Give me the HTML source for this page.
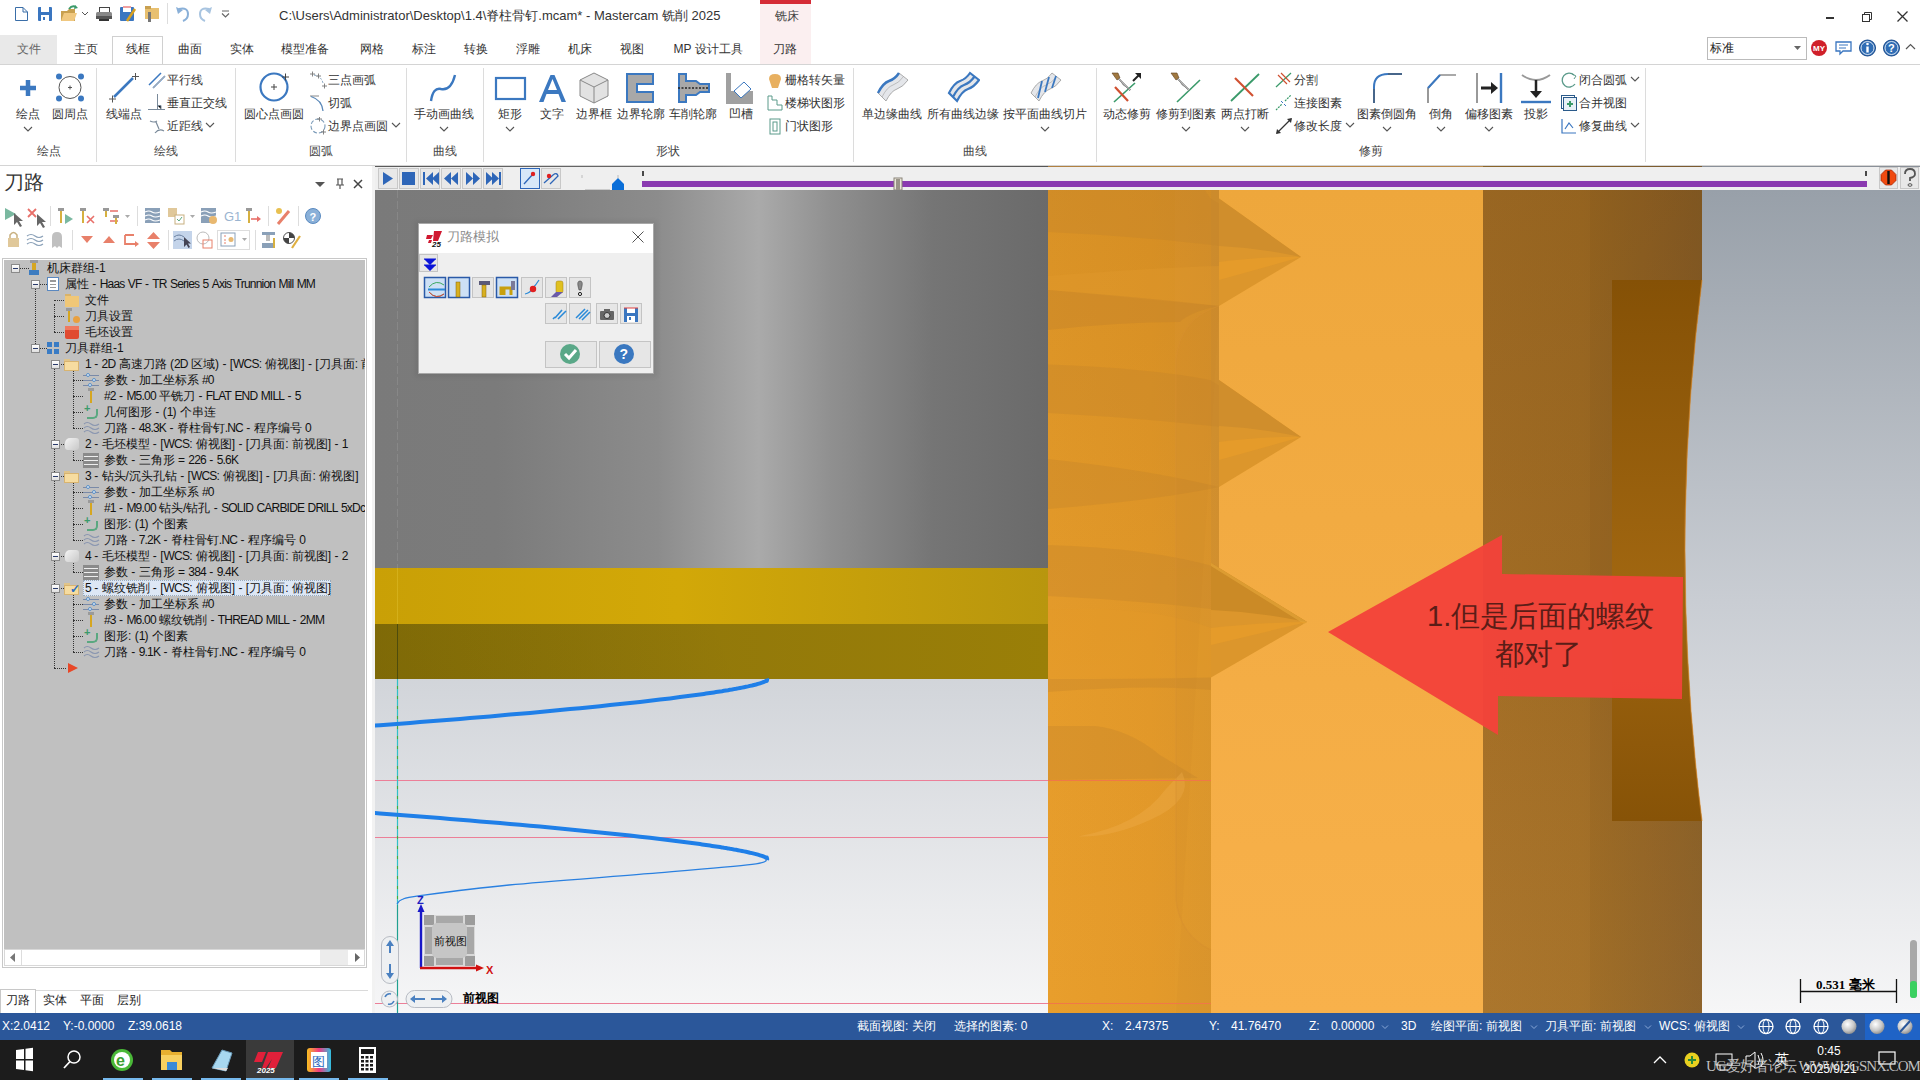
<!DOCTYPE html>
<html><head><meta charset="utf-8">
<style>
*{box-sizing:border-box}
html,body{margin:0;padding:0}
body{width:1920px;height:1080px;overflow:hidden;position:relative;font-family:"Liberation Sans",sans-serif;background:#fff;color:#222}
.a{position:absolute}
.t{position:absolute;white-space:nowrap;line-height:1}
</style></head><body>
<svg class="a" style="left:0px;top:0px" width="240" height="32" viewBox="0 0 240 32"><path d="M15.5 7.5 H23 L27.5 12 V20.5 H15.5 Z M23 7.5 V12 H27.5" stroke="#3a6ea8" stroke-width="1" fill="#fff"/><rect x="38" y="7" width="14" height="14" rx="1" fill="#3a76c0"/><rect x="41" y="7" width="8" height="5" fill="#fff"/><rect x="41" y="15" width="8" height="6" fill="#fff"/><rect x="43" y="17" width="2" height="3" fill="#3a76c0"/><path d="M61 11 H67 L69 9 H75 V21 H61 Z" fill="#c8a050"/><path d="M61 21 L64 13 H77 L74 21 Z" fill="#f0c880"/><path d="M69 9 Q72 5 76 7" stroke="#3a9a6a" stroke-width="2" fill="none"/><path d="M75 5 L78 8 L74 9 Z" fill="#3a9a6a"/><path d="M82 12 L85 15 L88 12" stroke="#555" fill="none"/><rect x="99.5" y="7.5" width="10" height="5" fill="#fff" stroke="#444"/><rect x="96" y="12" width="16" height="7" rx="1.5" fill="#888"/><rect x="96" y="16" width="16" height="3" fill="#555"/><rect x="99" y="19" width="10" height="2" fill="#333"/><rect x="120" y="7" width="14" height="14" rx="1" fill="#3a76c0"/><rect x="123" y="7" width="8" height="5" fill="#fff"/><path d="M123 7 H131" stroke="#e04040"/><path d="M127 21 L135 9" stroke="#d8a020" stroke-width="2.5"/><rect x="145" y="8" width="14" height="11" fill="#e8c070"/><rect x="145" y="6" width="6" height="3" fill="#c8a050"/><rect x="148" y="12" width="3" height="10" fill="#777"/><rect x="167" y="3" width="1" height="21" fill="#ddd"/><path d="M179 9 Q188 7 188 14 Q188 19 183 21" stroke="#8ab0d8" stroke-width="2" fill="none"/><path d="M176 7 L178 14 L183 10 Z" fill="#8ab0d8"/><path d="M209 9 Q200 7 200 14 Q200 19 205 21" stroke="#a8c4e0" stroke-width="2" fill="none"/><path d="M212 7 L210 14 L205 10 Z" fill="#a8c4e0"/><path d="M222 11 H229 M222 13.5 L225.5 17 L229 13.5" stroke="#666" stroke-width="1.2" fill="none"/></svg>
<div class="t" style="left:279px;top:9px;font-size:13px;color:#333;">C:\Users\Administrator\Desktop\1.4\脊柱骨钉.mcam* - Mastercam 铣削 2025</div>
<div class="a" style="left:760px;top:0;width:51px;height:64px;background:#fbeff0"></div>
<div class="a" style="left:760px;top:0;width:51px;height:4px;background:#d52b36"></div>
<div class="t" style="left:775px;top:10px;font-size:12px;color:#444;">铣床</div>
<div class="a" style="left:1826px;top:17px;width:8px;height:1.5px;background:#333"></div>
<svg class="a" style="left:1861px;top:11px" width="12" height="12" viewBox="0 0 12 12"><rect x="1.5" y="3.5" width="7" height="7" stroke="#333" fill="#fff"/><path d="M3.5 3.5 V1.5 H10.5 V8.5 H8.5" stroke="#333" fill="none"/></svg>
<svg class="a" style="left:1896px;top:10px" width="13" height="13" viewBox="0 0 13 13"><path d="M1.5 1.5 L11.5 11.5 M11.5 1.5 L1.5 11.5" stroke="#333" stroke-width="1.3"/></svg>
<div class="a" style="left:0;top:35px;width:57px;height:29px;background:#e9e9e9"></div>
<div class="a" style="left:112px;top:36px;width:51px;height:29px;background:#fff;border:1px solid #d0d0d0;border-bottom:none"></div>
<div class="t" style="left:-121px;width:300px;text-align:center;top:43px;font-size:12px;color:#666;">文件</div>
<div class="t" style="left:-64px;width:300px;text-align:center;top:43px;font-size:12px;color:#333;">主页</div>
<div class="t" style="left:-12px;width:300px;text-align:center;top:43px;font-size:12px;color:#333;">线框</div>
<div class="t" style="left:40px;width:300px;text-align:center;top:43px;font-size:12px;color:#333;">曲面</div>
<div class="t" style="left:92px;width:300px;text-align:center;top:43px;font-size:12px;color:#333;">实体</div>
<div class="t" style="left:155px;width:300px;text-align:center;top:43px;font-size:12px;color:#333;">模型准备</div>
<div class="t" style="left:222px;width:300px;text-align:center;top:43px;font-size:12px;color:#333;">网格</div>
<div class="t" style="left:274px;width:300px;text-align:center;top:43px;font-size:12px;color:#333;">标注</div>
<div class="t" style="left:326px;width:300px;text-align:center;top:43px;font-size:12px;color:#333;">转换</div>
<div class="t" style="left:378px;width:300px;text-align:center;top:43px;font-size:12px;color:#333;">浮雕</div>
<div class="t" style="left:430px;width:300px;text-align:center;top:43px;font-size:12px;color:#333;">机床</div>
<div class="t" style="left:482px;width:300px;text-align:center;top:43px;font-size:12px;color:#333;">视图</div>
<div class="t" style="left:558px;width:300px;text-align:center;top:43px;font-size:12px;color:#333;">MP 设计工具</div>
<div class="t" style="left:635px;width:300px;text-align:center;top:43px;font-size:12px;color:#333;">刀路</div>
<div class="a" style="left:1707px;top:37px;width:100px;height:23px;border:1px solid #bbb;background:#fff"></div>
<div class="t" style="left:1710px;top:42px;font-size:12px;color:#222;">标准</div>
<svg class="a" style="left:1794px;top:46px" width="8" height="5" viewBox="0 0 8 5"><path d="M0 0 H7 L3.5 4 Z" fill="#666"/></svg>
<svg class="a" style="left:1810px;top:38px" width="20" height="20" viewBox="0 0 20 20"><circle cx="9" cy="10" r="8" fill="#d0202a"/><text x="3" y="13" font-size="8" fill="#fff" font-family="Liberation Sans" font-weight="bold">MY</text></svg>
<svg class="a" style="left:1834px;top:38px" width="20" height="20" viewBox="0 0 20 20"><path d="M2 4 H17 V13 H9 L6 16 V13 H2 Z" stroke="#3a76c0" stroke-width="1.3" fill="#fff"/><path d="M5 7 H14 M5 10 H12" stroke="#3a76c0"/></svg>
<svg class="a" style="left:1858px;top:38px" width="20" height="20" viewBox="0 0 20 20"><circle cx="9.5" cy="10" r="8" fill="#2f6db5" stroke="#1a4a8a"/><circle cx="9.5" cy="10" r="6.5" fill="none" stroke="#fff" stroke-width="0.8"/><rect x="8.3" y="8.5" width="2.4" height="6" fill="#fff"/><circle cx="9.5" cy="6" r="1.3" fill="#fff"/></svg>
<svg class="a" style="left:1882px;top:38px" width="20" height="20" viewBox="0 0 20 20"><circle cx="9.5" cy="10" r="8" fill="#2f6db5" stroke="#1a4a8a"/><circle cx="9.5" cy="10" r="6.5" fill="none" stroke="#fff" stroke-width="0.8"/><text x="6" y="14" font-size="11" fill="#fff" font-family="Liberation Sans" font-weight="bold">?</text></svg>
<svg class="a" style="left:1905px;top:43px" width="11" height="7" viewBox="0 0 11 7"><path d="M1 6 L5.5 1.5 L10 6" stroke="#555" stroke-width="1.2" fill="none"/></svg>
<div class="a" style="left:0;top:64px;width:1920px;height:1px;background:#d4d4d4"></div>
<div class="a" style="left:0;top:165px;width:1920px;height:1px;background:#d4d4d4"></div>
<div class="a" style="left:96px;top:68px;width:1px;height:94px;background:#dcdcdc"></div>
<div class="a" style="left:235px;top:68px;width:1px;height:94px;background:#dcdcdc"></div>
<div class="a" style="left:406px;top:68px;width:1px;height:94px;background:#dcdcdc"></div>
<div class="a" style="left:483px;top:68px;width:1px;height:94px;background:#dcdcdc"></div>
<div class="a" style="left:853px;top:68px;width:1px;height:94px;background:#dcdcdc"></div>
<div class="a" style="left:1096px;top:68px;width:1px;height:94px;background:#dcdcdc"></div>
<div class="a" style="left:1645px;top:68px;width:1px;height:94px;background:#dcdcdc"></div>
<div class="t" style="left:-101px;width:300px;text-align:center;top:145px;font-size:12px;color:#444;">绘点</div>
<div class="t" style="left:16px;width:300px;text-align:center;top:145px;font-size:12px;color:#444;">绘线</div>
<div class="t" style="left:171px;width:300px;text-align:center;top:145px;font-size:12px;color:#444;">圆弧</div>
<div class="t" style="left:295px;width:300px;text-align:center;top:145px;font-size:12px;color:#444;">曲线</div>
<div class="t" style="left:518px;width:300px;text-align:center;top:145px;font-size:12px;color:#444;">形状</div>
<div class="t" style="left:825px;width:300px;text-align:center;top:145px;font-size:12px;color:#444;">曲线</div>
<div class="t" style="left:1221px;width:300px;text-align:center;top:145px;font-size:12px;color:#444;">修剪</div>
<svg class="a" style="left:11px;top:71px" width="34" height="34" viewBox="0 0 34 34"><path d="M17 9 V25 M9 17 H25" stroke="#3b78c0" stroke-width="4.5"/></svg>
<div class="t" style="left:-122px;width:300px;text-align:center;top:108px;font-size:12px;color:#333;">绘点</div>
<svg class="a" style="left:23px;top:126px" width="10" height="6" viewBox="0 0 10 6"><path d="M1 1 L5 5 L9 1" stroke="#555" stroke-width="1.1" fill="none"/></svg>
<svg class="a" style="left:53px;top:71px" width="34" height="34" viewBox="0 0 34 34"><circle cx="17" cy="16.5" r="11" stroke="#555" stroke-width="1" fill="none"/><path d="M15 16.5 H19 M17 14.5 V18.5" stroke="#555"/><circle cx="6" cy="5.5" r="3" fill="#3b78c0"/><circle cx="28" cy="5.5" r="3" fill="#3b78c0"/><circle cx="6" cy="27.5" r="3" fill="#3b78c0"/><circle cx="28" cy="27.5" r="3" fill="#3b78c0"/></svg>
<div class="t" style="left:-80px;width:300px;text-align:center;top:108px;font-size:12px;color:#333;">圆周点</div>
<svg class="a" style="left:107px;top:71px" width="34" height="34" viewBox="0 0 34 34"><path d="M7 26 L26 7" stroke="#3b78c0" stroke-width="2.5"/><path d="M2 28 H9 M5.5 24.5 V31.5 M25 5.5 H32 M28.5 2 V9" stroke="#555" stroke-width="1"/></svg>
<div class="t" style="left:-26px;width:300px;text-align:center;top:108px;font-size:12px;color:#333;">线端点</div>
<svg class="a" style="left:148px;top:71px" width="18" height="18" viewBox="0 0 18 18"><path d="M1 14 L13 2 M5 17 L17 5" stroke="#3b78c0" stroke-width="1.5"/><path d="M5 17 L17 5" stroke="#aaa" stroke-width="1"/></svg>
<div class="t" style="left:167px;top:74px;font-size:12px;color:#333;">平行线</div>
<svg class="a" style="left:148px;top:94px" width="18" height="18" viewBox="0 0 18 18"><path d="M0 15.5 H17 M9.5 0 V15 M9.5 11.5 H13 V15" stroke="#7a8a9a" stroke-width="1"/></svg>
<div class="t" style="left:167px;top:97px;font-size:12px;color:#333;">垂直正交线</div>
<svg class="a" style="left:148px;top:117px" width="18" height="18" viewBox="0 0 18 18"><path d="M2 4 Q6 6 9 4 M8 5 L11 12 M7 16 Q11 11 16 14" stroke="#7a8a9a" stroke-width="1.2" fill="none"/></svg>
<div class="t" style="left:167px;top:120px;font-size:12px;color:#333;">近距线</div>
<svg class="a" style="left:205px;top:122px" width="10" height="6" viewBox="0 0 10 6"><path d="M1 1 L5 5 L9 1" stroke="#555" stroke-width="1.1" fill="none"/></svg>
<svg class="a" style="left:257px;top:71px" width="34" height="34" viewBox="0 0 34 34"><circle cx="17" cy="16" r="13.5" stroke="#3b78c0" stroke-width="2.2" fill="none"/><path d="M14 16 H20 M17 13 V19 M25 6 H32 M28.5 2.5 V9.5" stroke="#444" stroke-width="1"/></svg>
<div class="t" style="left:124px;width:300px;text-align:center;top:108px;font-size:12px;color:#333;">圆心点画圆</div>
<svg class="a" style="left:309px;top:71px" width="18" height="18" viewBox="0 0 18 18"><path d="M5 4 Q12 5 14 12" stroke="#7a9ab8" stroke-width="1" fill="none" stroke-dasharray="2 1.5"/><path d="M1 3 H6 M3.5 0.5 V5.5 M7 5 H12 M9.5 2.5 V7.5 M13 15 H18 M15.5 12.5 V17.5" stroke="#777" stroke-width="0.9"/></svg>
<div class="t" style="left:328px;top:74px;font-size:12px;color:#333;">三点画弧</div>
<svg class="a" style="left:309px;top:94px" width="18" height="18" viewBox="0 0 18 18"><path d="M1 2 H10" stroke="#888" stroke-width="1"/><path d="M2 2.5 Q13 6 14 17" stroke="#5a88b8" stroke-width="1.3" fill="none"/></svg>
<div class="t" style="left:328px;top:97px;font-size:12px;color:#333;">切弧</div>
<svg class="a" style="left:309px;top:117px" width="18" height="18" viewBox="0 0 18 18"><circle cx="9" cy="9" r="7" stroke="#7a9ab8" stroke-width="1.1" fill="none" stroke-dasharray="4 2"/><path d="M8 2 H13 M10.5 -0.5 V4.5 M12 15 H17 M14.5 12.5 V17.5" stroke="#777" stroke-width="0.9"/></svg>
<div class="t" style="left:328px;top:120px;font-size:12px;color:#333;">边界点画圆</div>
<svg class="a" style="left:391px;top:122px" width="10" height="6" viewBox="0 0 10 6"><path d="M1 1 L5 5 L9 1" stroke="#555" stroke-width="1.1" fill="none"/></svg>
<svg class="a" style="left:427px;top:71px" width="34" height="34" viewBox="0 0 34 34"><path d="M4 30 Q6 16 14 18 Q24 20 28 4" stroke="#3b78c0" stroke-width="2.4" fill="none"/></svg>
<div class="t" style="left:294px;width:300px;text-align:center;top:108px;font-size:12px;color:#333;">手动画曲线</div>
<svg class="a" style="left:439px;top:126px" width="10" height="6" viewBox="0 0 10 6"><path d="M1 1 L5 5 L9 1" stroke="#555" stroke-width="1.1" fill="none"/></svg>
<svg class="a" style="left:493px;top:71px" width="34" height="34" viewBox="0 0 34 34"><rect x="3" y="7" width="29" height="21" stroke="#3b78c0" stroke-width="2.2" fill="none"/></svg>
<div class="t" style="left:360px;width:300px;text-align:center;top:108px;font-size:12px;color:#333;">矩形</div>
<svg class="a" style="left:505px;top:126px" width="10" height="6" viewBox="0 0 10 6"><path d="M1 1 L5 5 L9 1" stroke="#555" stroke-width="1.1" fill="none"/></svg>
<svg class="a" style="left:535px;top:71px" width="34" height="34" viewBox="0 0 34 34"><path d="M4 31 L15.5 4 H19.5 L31 31 H26.5 L23.5 23 H11.5 L8.5 31 Z M13 19 H22 L17.5 8 Z" fill="#3b78c0" fill-rule="evenodd"/></svg>
<div class="t" style="left:402px;width:300px;text-align:center;top:108px;font-size:12px;color:#333;">文字</div>
<svg class="a" style="left:577px;top:71px" width="34" height="34" viewBox="0 0 34 34"><path d="M17 2 L31 9 V25 L17 32 L3 25 V9 Z" fill="#e2e2e2" stroke="#888"/><path d="M3 9 L17 16 L31 9 M17 16 V32" stroke="#888" fill="none"/></svg>
<div class="t" style="left:444px;width:300px;text-align:center;top:108px;font-size:12px;color:#333;">边界框</div>
<svg class="a" style="left:624px;top:71px" width="34" height="34" viewBox="0 0 34 34"><path d="M3 3 H29 V13 H13 V21 H29 V31 H3 Z" fill="#a8a8a8" stroke="#3b78c0" stroke-width="2"/></svg>
<div class="t" style="left:491px;width:300px;text-align:center;top:108px;font-size:12px;color:#333;">边界轮廓</div>
<svg class="a" style="left:676px;top:71px" width="34" height="34" viewBox="0 0 34 34"><path d="M3 3 H10 V10 H20 L24 13 H33 V21 H24 L20 24 H10 V31 H3 Z" fill="#a8a8a8" stroke="#3b78c0" stroke-width="2"/><path d="M2 17 H33" stroke="#222" stroke-width="1.5" stroke-dasharray="2 1.5"/></svg>
<div class="t" style="left:543px;width:300px;text-align:center;top:108px;font-size:12px;color:#333;">车削轮廓</div>
<svg class="a" style="left:724px;top:71px" width="34" height="34" viewBox="0 0 34 34"><path d="M2 2 H7 V20 H29 V33 H2 Z" fill="#a0a0a0"/><path d="M10 20 L20 11 L27 18 L17 27 Z" fill="#fff" stroke="#3b78c0" stroke-width="1"/></svg>
<div class="t" style="left:591px;width:300px;text-align:center;top:108px;font-size:12px;color:#333;">凹槽</div>
<svg class="a" style="left:766px;top:71px" width="18" height="18" viewBox="0 0 18 18"><path d="M3 8 Q3 3 9 3 Q15 3 15 8 L12 17 H6 Z" fill="#e8b060"/></svg>
<div class="t" style="left:785px;top:74px;font-size:12px;color:#333;">栅格转矢量</div>
<svg class="a" style="left:766px;top:94px" width="18" height="18" viewBox="0 0 18 18"><path d="M2 2 V16 H16 V11 H11 V6 H6 V2 Z" stroke="#5a9a8a" stroke-width="1" fill="none"/></svg>
<div class="t" style="left:785px;top:97px;font-size:12px;color:#333;">楼梯状图形</div>
<svg class="a" style="left:766px;top:117px" width="18" height="18" viewBox="0 0 18 18"><rect x="4" y="2" width="10" height="15" stroke="#5a9a8a" fill="none"/><rect x="7" y="5" width="4" height="9" stroke="#5a9a8a" fill="none"/></svg>
<div class="t" style="left:785px;top:120px;font-size:12px;color:#333;">门状图形</div>
<svg class="a" style="left:875px;top:71px" width="34" height="34" viewBox="0 0 34 34"><path d="M3 22 Q8 12 14 10 Q20 8 24 2 L33 9 Q28 16 22 18 Q16 20 11 30 Z" fill="#e4e6ea" stroke="#999" stroke-width="0.8"/><path d="M7 26 Q12 16 18 14 Q24 12 28.5 5.5" stroke="#aaa" stroke-width="0.7" fill="none"/><path d="M3 22 Q8 12 14 10 Q20 8 24 2" stroke="#3b78c0" stroke-width="2.4" fill="none"/></svg>
<div class="t" style="left:742px;width:300px;text-align:center;top:108px;font-size:12px;color:#333;">单边缘曲线</div>
<svg class="a" style="left:946px;top:71px" width="34" height="34" viewBox="0 0 34 34"><path d="M3 22 Q8 12 14 10 Q20 8 24 2 L33 9 Q28 16 22 18 Q16 20 11 30 Z" fill="#e4e6ea" stroke="#999" stroke-width="0.8"/><path d="M7 26 Q12 16 18 14 Q24 12 28.5 5.5" stroke="#aaa" stroke-width="0.7" fill="none"/><path d="M3 22 Q8 12 14 10 Q20 8 24 2 L33 9 Q28 16 22 18 Q16 20 11 30 Z M7 26 Q12 16 18 14 Q24 12 28.5 5.5" stroke="#3b78c0" stroke-width="2.2" fill="none"/></svg>
<div class="t" style="left:813px;width:300px;text-align:center;top:108px;font-size:12px;color:#333;">所有曲线边缘</div>
<svg class="a" style="left:1028px;top:71px" width="34" height="34" viewBox="0 0 34 34"><path d="M3 22 Q8 12 14 10 Q20 8 24 2 L33 9 Q28 16 22 18 Q16 20 11 30 Z" fill="#e4e6ea" stroke="#999" stroke-width="0.8"/><path d="M7 26 Q12 16 18 14 Q24 12 28.5 5.5" stroke="#aaa" stroke-width="0.7" fill="none"/><path d="M10 27 L14 10 M17 21 L21 6 M24 17 L28 5" stroke="#3b78c0" stroke-width="1.8"/></svg>
<div class="t" style="left:895px;width:300px;text-align:center;top:108px;font-size:12px;color:#333;">按平面曲线切片</div>
<svg class="a" style="left:1040px;top:126px" width="10" height="6" viewBox="0 0 10 6"><path d="M1 1 L5 5 L9 1" stroke="#555" stroke-width="1.1" fill="none"/></svg>
<svg class="a" style="left:1110px;top:71px" width="34" height="34" viewBox="0 0 34 34"><path d="M4 31 L25 12" stroke="#3a9a6a" stroke-width="1.6"/><path d="M5 16 L18 30" stroke="#d05030" stroke-width="2.2"/><path d="M2 2 L8 2 L10 7 L7 9 Z" fill="#a07840" stroke="#604020" stroke-width="0.6"/><path d="M8 8 L20 20 L12 12 Z M9 7 L21 19 L13 14 Z" fill="#b8b8b8" stroke="#888" stroke-width="0.6"/><path d="M23 10 L30 3" stroke="#222" stroke-width="2"/><path d="M25 2 H31 V8 Z" fill="#222"/></svg>
<div class="t" style="left:977px;width:300px;text-align:center;top:108px;font-size:12px;color:#333;">动态修剪</div>
<svg class="a" style="left:1169px;top:71px" width="34" height="34" viewBox="0 0 34 34"><path d="M8 31 L31 9" stroke="#3a9a6a" stroke-width="1.6"/><path d="M2 2 L8 2 L10 7 L7 9 Z" fill="#a07840" stroke="#604020" stroke-width="0.6"/><path d="M8 8 L20 20 L12 12 Z M9 7 L21 19 L13 14 Z" fill="#b8b8b8" stroke="#888" stroke-width="0.6"/></svg>
<div class="t" style="left:1036px;width:300px;text-align:center;top:108px;font-size:12px;color:#333;">修剪到图素</div>
<svg class="a" style="left:1181px;top:126px" width="10" height="6" viewBox="0 0 10 6"><path d="M1 1 L5 5 L9 1" stroke="#555" stroke-width="1.1" fill="none"/></svg>
<svg class="a" style="left:1228px;top:71px" width="34" height="34" viewBox="0 0 34 34"><path d="M3 30 L31 3" stroke="#3a9a6a" stroke-width="1.8"/><path d="M7 7 L25 25" stroke="#d05030" stroke-width="2.2"/></svg>
<div class="t" style="left:1095px;width:300px;text-align:center;top:108px;font-size:12px;color:#333;">两点打断</div>
<svg class="a" style="left:1240px;top:126px" width="10" height="6" viewBox="0 0 10 6"><path d="M1 1 L5 5 L9 1" stroke="#555" stroke-width="1.1" fill="none"/></svg>
<svg class="a" style="left:1275px;top:71px" width="18" height="18" viewBox="0 0 18 18"><path d="M1 16 L16 2" stroke="#3a9a6a" stroke-width="1.2"/><path d="M3 4 L12 13 M6 2 L15 11" stroke="#d05030" stroke-width="1.2"/></svg>
<div class="t" style="left:1294px;top:74px;font-size:12px;color:#333;">分割</div>
<svg class="a" style="left:1275px;top:94px" width="18" height="18" viewBox="0 0 18 18"><path d="M1 16 L7 10 M10 7 L16 1" stroke="#3a9a6a" stroke-width="1.2" stroke-dasharray="2 1"/><path d="M6 7 L8 9 M9 10 L11 12" stroke="#3a76c0"/></svg>
<div class="t" style="left:1294px;top:97px;font-size:12px;color:#333;">连接图素</div>
<svg class="a" style="left:1275px;top:117px" width="18" height="18" viewBox="0 0 18 18"><path d="M2 16 L16 2" stroke="#333" stroke-width="1.2"/><path d="M1 17 L2 12 L6 16 Z M17 1 L12 2 L16 6 Z" fill="#333"/></svg>
<div class="t" style="left:1294px;top:120px;font-size:12px;color:#333;">修改长度</div>
<svg class="a" style="left:1345px;top:122px" width="10" height="6" viewBox="0 0 10 6"><path d="M1 1 L5 5 L9 1" stroke="#555" stroke-width="1.1" fill="none"/></svg>
<svg class="a" style="left:1370px;top:71px" width="34" height="34" viewBox="0 0 34 34"><path d="M4 32 V16 Q4 3 18 3 H32" stroke="#3b78c0" stroke-width="2" fill="none"/><path d="M4 32 V18 M18 3 H32" stroke="#555" stroke-width="1" fill="none"/></svg>
<div class="t" style="left:1237px;width:300px;text-align:center;top:108px;font-size:12px;color:#333;">图素倒圆角</div>
<svg class="a" style="left:1382px;top:126px" width="10" height="6" viewBox="0 0 10 6"><path d="M1 1 L5 5 L9 1" stroke="#555" stroke-width="1.1" fill="none"/></svg>
<svg class="a" style="left:1424px;top:71px" width="34" height="34" viewBox="0 0 34 34"><path d="M4 32 V17 L16 4 H32" stroke="#555" stroke-width="1.2" fill="none"/><path d="M4 17 L16 4" stroke="#3b78c0" stroke-width="2"/></svg>
<div class="t" style="left:1291px;width:300px;text-align:center;top:108px;font-size:12px;color:#333;">倒角</div>
<svg class="a" style="left:1436px;top:126px" width="10" height="6" viewBox="0 0 10 6"><path d="M1 1 L5 5 L9 1" stroke="#555" stroke-width="1.1" fill="none"/></svg>
<svg class="a" style="left:1472px;top:71px" width="34" height="34" viewBox="0 0 34 34"><path d="M5 2 V32" stroke="#999" stroke-width="2"/><path d="M29 2 V32" stroke="#3b78c0" stroke-width="2.4"/><path d="M9 17 H20" stroke="#222" stroke-width="3"/><path d="M19 11 L26 17 L19 23 Z" fill="#222"/></svg>
<div class="t" style="left:1339px;width:300px;text-align:center;top:108px;font-size:12px;color:#333;">偏移图素</div>
<svg class="a" style="left:1484px;top:126px" width="10" height="6" viewBox="0 0 10 6"><path d="M1 1 L5 5 L9 1" stroke="#555" stroke-width="1.1" fill="none"/></svg>
<svg class="a" style="left:1519px;top:71px" width="34" height="34" viewBox="0 0 34 34"><path d="M3 4 Q17 14 31 4" stroke="#999" stroke-width="2" fill="none"/><path d="M17 9 V22" stroke="#222" stroke-width="2.5"/><path d="M11 20 L17 27 L23 20 Z" fill="#222"/><path d="M2 31 H32" stroke="#3b78c0" stroke-width="2.4"/></svg>
<div class="t" style="left:1386px;width:300px;text-align:center;top:108px;font-size:12px;color:#333;">投影</div>
<svg class="a" style="left:1560px;top:71px" width="18" height="18" viewBox="0 0 18 18"><path d="M14 4 A7 7 0 1 0 15 13" stroke="#5a9a8a" stroke-width="1.3" fill="none"/><path d="M12 3 L16 5 L14 8" stroke="#5a9a8a" fill="none"/></svg>
<div class="t" style="left:1579px;top:74px;font-size:12px;color:#333;">闭合圆弧</div>
<svg class="a" style="left:1630px;top:76px" width="10" height="6" viewBox="0 0 10 6"><path d="M1 1 L5 5 L9 1" stroke="#555" stroke-width="1.1" fill="none"/></svg>
<svg class="a" style="left:1560px;top:94px" width="18" height="18" viewBox="0 0 18 18"><rect x="1.5" y="1.5" width="13" height="13" stroke="#2a5a8a" fill="#fff"/><rect x="3.5" y="3.5" width="13" height="13" stroke="#2a5a8a" fill="#e8f0f8"/><path d="M7 10 H13 M10 7 V13" stroke="#3a9a6a" stroke-width="2"/></svg>
<div class="t" style="left:1579px;top:97px;font-size:12px;color:#333;">合并视图</div>
<svg class="a" style="left:1560px;top:117px" width="18" height="18" viewBox="0 0 18 18"><path d="M2 2 V16 H16 M5 12 L9 6 L13 11" stroke="#3a76c0" stroke-width="1.2" fill="none"/></svg>
<div class="t" style="left:1579px;top:120px;font-size:12px;color:#333;">修复曲线</div>
<svg class="a" style="left:1630px;top:122px" width="10" height="6" viewBox="0 0 10 6"><path d="M1 1 L5 5 L9 1" stroke="#555" stroke-width="1.1" fill="none"/></svg><div class="a" style="left:0;top:166px;width:375px;height:847px;background:#fff"></div>
<div class="t" style="left:4px;top:172px;font-size:20px;color:#333">刀路</div>
<svg class="a" style="left:312px;top:177px" width="56" height="14"><path d="M3 5 H13 L8 10 Z" fill="#555"/><path d="M25 2 H31 M26 2 V8 M30 2 V8 M24 8 H32 M28 8 V12" stroke="#555" stroke-width="1.2" fill="none"/><path d="M42 3 L50 11 M50 3 L42 11" stroke="#444" stroke-width="1.5"/></svg>
<div class="a" style="left:2px;top:258px;width:365px;height:710px;border:1px solid #c8c8c8;background:#fff"></div>
<div class="a" style="left:4px;top:260px;width:361px;height:689px;background:#c0c0c0"></div>
<div class="a" style="left:4px;top:949px;width:361px;height:17px;background:#fff;border:1px solid #d8d8d8"></div>
<svg class="a" style="left:6px;top:951px" width="14" height="13"><path d="M9 2 L4 6.5 L9 11 Z" fill="#777"/></svg>
<div class="a" style="left:320px;top:950px;width:28px;height:15px;background:#ececec"></div>
<svg class="a" style="left:350px;top:951px" width="14" height="13"><path d="M5 2 L10 6.5 L5 11 Z" fill="#666"/></svg>
<div class="a" style="left:21px;top:950px;width:1px;height:15px;background:#ddd"></div>
<div class="a" style="left:0;top:990px;width:368px;height:1px;background:#dadada"></div>
<div class="a" style="left:0;top:989px;width:36px;height:24px;background:#fff;border:1px solid #c8c8c8;border-bottom:none"></div>
<div class="t" style="left:6px;top:994px;font-size:12px;color:#222">刀路</div>
<div class="t" style="left:43px;top:994px;font-size:12px;color:#222">实体</div>
<div class="t" style="left:80px;top:994px;font-size:12px;color:#222">平面</div>
<div class="t" style="left:117px;top:994px;font-size:12px;color:#222">层别</div>
<div class="a" style="left:372px;top:166px;width:3px;height:847px;background:#f2f2f2"></div>
<div class="a" style="left:0;top:0;width:365px;height:949px;overflow:hidden">
<div class="a" style="left:83px;top:580px;width:248px;height:16px;background:#dde7f5;border:1px dotted #9ab"></div>
<div class="a" style="left:35px;top:288px;width:1px;height:60px;border-left:1px dotted #333"></div>
<div class="a" style="left:54px;top:304px;width:1px;height:28px;border-left:1px dotted #333"></div>
<div class="a" style="left:54px;top:368px;width:1px;height:300px;border-left:1px dotted #333"></div>
<div class="a" style="left:54px;top:300px;width:10px;height:1px;border-top:1px dotted #333"></div>
<div class="a" style="left:54px;top:316px;width:10px;height:1px;border-top:1px dotted #333"></div>
<div class="a" style="left:54px;top:332px;width:10px;height:1px;border-top:1px dotted #333"></div>
<div class="a" style="left:73px;top:369px;width:1px;height:59px;border-left:1px dotted #333"></div>
<div class="a" style="left:73px;top:380px;width:10px;height:1px;border-top:1px dotted #333"></div>
<div class="a" style="left:73px;top:396px;width:10px;height:1px;border-top:1px dotted #333"></div>
<div class="a" style="left:73px;top:412px;width:10px;height:1px;border-top:1px dotted #333"></div>
<div class="a" style="left:73px;top:428px;width:10px;height:1px;border-top:1px dotted #333"></div>
<div class="a" style="left:73px;top:449px;width:1px;height:11px;border-left:1px dotted #333"></div>
<div class="a" style="left:73px;top:460px;width:10px;height:1px;border-top:1px dotted #333"></div>
<div class="a" style="left:73px;top:481px;width:1px;height:59px;border-left:1px dotted #333"></div>
<div class="a" style="left:73px;top:492px;width:10px;height:1px;border-top:1px dotted #333"></div>
<div class="a" style="left:73px;top:508px;width:10px;height:1px;border-top:1px dotted #333"></div>
<div class="a" style="left:73px;top:524px;width:10px;height:1px;border-top:1px dotted #333"></div>
<div class="a" style="left:73px;top:540px;width:10px;height:1px;border-top:1px dotted #333"></div>
<div class="a" style="left:73px;top:561px;width:1px;height:11px;border-left:1px dotted #333"></div>
<div class="a" style="left:73px;top:572px;width:10px;height:1px;border-top:1px dotted #333"></div>
<div class="a" style="left:73px;top:593px;width:1px;height:59px;border-left:1px dotted #333"></div>
<div class="a" style="left:73px;top:604px;width:10px;height:1px;border-top:1px dotted #333"></div>
<div class="a" style="left:73px;top:620px;width:10px;height:1px;border-top:1px dotted #333"></div>
<div class="a" style="left:73px;top:636px;width:10px;height:1px;border-top:1px dotted #333"></div>
<div class="a" style="left:73px;top:652px;width:10px;height:1px;border-top:1px dotted #333"></div>
<div class="a" style="left:58px;top:364px;width:6px;height:1px;border-top:1px dotted #333"></div>
<div class="a" style="left:58px;top:444px;width:6px;height:1px;border-top:1px dotted #333"></div>
<div class="a" style="left:58px;top:476px;width:6px;height:1px;border-top:1px dotted #333"></div>
<div class="a" style="left:58px;top:556px;width:6px;height:1px;border-top:1px dotted #333"></div>
<div class="a" style="left:58px;top:588px;width:6px;height:1px;border-top:1px dotted #333"></div>
<div class="a" style="left:54px;top:668px;width:12px;height:1px;border-top:1px dotted #333"></div>
<div class="a" style="left:19px;top:268px;width:10px;height:1px;border-top:1px dotted #333"></div>
<div class="a" style="left:39px;top:284px;width:8px;height:1px;border-top:1px dotted #333"></div>
<div class="a" style="left:39px;top:348px;width:8px;height:1px;border-top:1px dotted #333"></div>
<div class="a" style="left:11px;top:264px;width:9px;height:9px;border:1px solid #8a8a8a;background:linear-gradient(#fff,#e0e0e0)"></div><div class="a" style="left:13px;top:268px;width:5px;height:1px;background:#2a3a6a"></div>
<div class="a" style="left:30px;top:260px;width:8px;height:3px;background:#9a9a9a"></div><div class="a" style="left:32px;top:263px;width:4px;height:7px;background:#d6a620"></div><div class="a" style="left:29px;top:270px;width:10px;height:5px;background:#3d7cc0"></div>
<div class="t" style="left:47px;top:262px;font-size:12px;color:#111">机床群组-<span style="letter-spacing:-0.8px">1</span></div>
<div class="a" style="left:31px;top:280px;width:9px;height:9px;border:1px solid #8a8a8a;background:linear-gradient(#fff,#e0e0e0)"></div><div class="a" style="left:33px;top:284px;width:5px;height:1px;background:#2a3a6a"></div>
<div class="a" style="left:47px;top:277px;width:12px;height:14px;background:#fff;border:1px solid #5a88c0"></div><div class="a" style="left:50px;top:280px;width:6px;height:2px;background:#999"></div><div class="a" style="left:50px;top:284px;width:6px;height:1px;background:#999"></div><div class="a" style="left:50px;top:287px;width:6px;height:1px;background:#999"></div>
<div class="t" style="left:65px;top:278px;font-size:12px;color:#111">属性 - <span style="letter-spacing:-0.8px">Haas</span> <span style="letter-spacing:-0.8px">VF</span> - <span style="letter-spacing:-0.8px">TR</span> <span style="letter-spacing:-0.8px">Series</span> <span style="letter-spacing:-0.8px">5</span> <span style="letter-spacing:-0.8px">Axis</span> <span style="letter-spacing:-0.8px">Trunnion</span> <span style="letter-spacing:-0.8px">Mill</span> <span style="letter-spacing:-0.8px">MM</span></div>
<div class="a" style="left:65px;top:294px;width:6px;height:3px;background:#d9b36a"></div><div class="a" style="left:65px;top:296px;width:14px;height:11px;background:#f0c777"></div>
<div class="t" style="left:85px;top:294px;font-size:12px;color:#111">文件</div>
<div class="a" style="left:66px;top:308px;width:6px;height:3px;background:#9a9a9a"></div><div class="a" style="left:68px;top:311px;width:2px;height:11px;background:#d6a620"></div><div class="a" style="left:73px;top:316px;width:7px;height:7px;border-radius:50%;background:#e8a040"></div>
<div class="t" style="left:85px;top:310px;font-size:12px;color:#111">刀具设置</div>
<div class="a" style="left:65px;top:326px;width:14px;height:13px;background:#e04a30;border-radius:2px"></div><div class="a" style="left:65px;top:326px;width:14px;height:4px;background:#f07a60"></div>
<div class="t" style="left:85px;top:326px;font-size:12px;color:#111">毛坯设置</div>
<div class="a" style="left:31px;top:344px;width:9px;height:9px;border:1px solid #8a8a8a;background:linear-gradient(#fff,#e0e0e0)"></div><div class="a" style="left:33px;top:348px;width:5px;height:1px;background:#2a3a6a"></div>
<div class="a" style="left:47px;top:342px;width:5px;height:5px;background:#3a7cc5"></div><div class="a" style="left:54px;top:342px;width:5px;height:5px;background:#3a7cc5"></div><div class="a" style="left:47px;top:349px;width:5px;height:5px;background:#3a7cc5"></div><div class="a" style="left:54px;top:349px;width:5px;height:5px;background:#3a7cc5"></div>
<div class="t" style="left:65px;top:342px;font-size:12px;color:#111">刀具群组-<span style="letter-spacing:-0.8px">1</span></div>
<div class="a" style="left:51px;top:360px;width:9px;height:9px;border:1px solid #8a8a8a;background:linear-gradient(#fff,#e0e0e0)"></div><div class="a" style="left:53px;top:364px;width:5px;height:1px;background:#2a3a6a"></div>
<div class="a" style="left:64px;top:359px;width:6px;height:3px;background:#e0c48a"></div><div class="a" style="left:64px;top:361px;width:15px;height:10px;background:#f6dca0;border:1px solid #d8b470"></div>
<div class="t" style="left:85px;top:358px;font-size:12px;color:#111"><span style="letter-spacing:-0.8px">1</span> - <span style="letter-spacing:-0.8px">2D</span> 高速刀路 (<span style="letter-spacing:-0.8px">2D</span> 区域) - [<span style="letter-spacing:-0.8px">WCS</span>: 俯视图] - [刀具面: 前视图] - <span style="letter-spacing:-0.8px">1</span></div>
<div class="a" style="left:83px;top:375px;width:16px;height:1px;background:#7a8aa8"></div><div class="a" style="left:83px;top:380px;width:16px;height:1px;background:#7a8aa8"></div><div class="a" style="left:83px;top:385px;width:16px;height:1px;background:#7a8aa8"></div><div class="a" style="left:86px;top:373px;width:4px;height:4px;border-radius:50%;border:1px solid #5a90c8;background:#dce8f4"></div><div class="a" style="left:92px;top:378px;width:4px;height:4px;border-radius:50%;border:1px solid #5a90c8;background:#dce8f4"></div><div class="a" style="left:88px;top:383px;width:4px;height:4px;border-radius:50%;border:1px solid #5a90c8;background:#dce8f4"></div>
<div class="t" style="left:104px;top:374px;font-size:12px;color:#111">参数 - 加工坐标系 <span style="letter-spacing:-0.8px">#0</span></div>
<div class="a" style="left:88px;top:388px;width:6px;height:3px;background:#9a9a9a"></div><div class="a" style="left:90px;top:391px;width:2px;height:12px;background:#d6a620"></div>
<div class="t" style="left:104px;top:390px;font-size:12px;color:#111"><span style="letter-spacing:-0.8px">#2</span> - <span style="letter-spacing:-0.8px">M5.00</span> 平铣刀 - <span style="letter-spacing:-0.8px">FLAT</span> <span style="letter-spacing:-0.8px">END</span> <span style="letter-spacing:-0.8px">MILL</span> - <span style="letter-spacing:-0.8px">5</span></div>
<div class="t" style="left:84px;top:403px;font-size:11px;color:#3a9a6a;font-weight:bold">+</div><div class="a" style="left:87px;top:409px;width:11px;height:10px;border-right:2px solid #5aa880;border-bottom:2px solid #5aa880;border-radius:0 0 5px 0"></div>
<div class="t" style="left:104px;top:406px;font-size:12px;color:#111">几何图形 - (<span style="letter-spacing:-0.8px">1</span>) 个串连</div>
<svg class="a" style="left:83px;top:420px" width="17" height="16"><path d="M1 4 Q4 1 8 4 T16 4 M1 8 Q4 5 8 8 T16 8 M1 12 Q4 9 8 12 T16 12" stroke="#8a96b0" stroke-width="1.2" fill="none"/></svg>
<div class="t" style="left:104px;top:422px;font-size:12px;color:#111">刀路 - <span style="letter-spacing:-0.8px">48.3K</span> - 脊柱骨钉<span style="letter-spacing:-0.8px">.NC</span> - 程序编号 <span style="letter-spacing:-0.8px">0</span></div>
<div class="a" style="left:51px;top:440px;width:9px;height:9px;border:1px solid #8a8a8a;background:linear-gradient(#fff,#e0e0e0)"></div><div class="a" style="left:53px;top:444px;width:5px;height:1px;background:#2a3a6a"></div>
<div class="a" style="left:65px;top:438px;width:14px;height:12px;border-radius:5px 3px 3px 3px;background:linear-gradient(135deg,#f4f4f4,#c8c8c8)"></div>
<div class="t" style="left:85px;top:438px;font-size:12px;color:#111"><span style="letter-spacing:-0.8px">2</span> - 毛坯模型 - [<span style="letter-spacing:-0.8px">WCS</span>: 俯视图] - [刀具面: 前视图] - <span style="letter-spacing:-0.8px">1</span></div>
<div class="a" style="left:83px;top:453px;width:16px;height:15px;background:#8a8a8a"></div><div class="a" style="left:84px;top:456px;width:14px;height:1px;background:#eee"></div><div class="a" style="left:84px;top:460px;width:14px;height:1px;background:#eee"></div><div class="a" style="left:84px;top:464px;width:14px;height:1px;background:#eee"></div>
<div class="t" style="left:104px;top:454px;font-size:12px;color:#111">参数 - 三角形 =  <span style="letter-spacing:-0.8px">226</span> - <span style="letter-spacing:-0.8px">5.6K</span></div>
<div class="a" style="left:51px;top:472px;width:9px;height:9px;border:1px solid #8a8a8a;background:linear-gradient(#fff,#e0e0e0)"></div><div class="a" style="left:53px;top:476px;width:5px;height:1px;background:#2a3a6a"></div>
<div class="a" style="left:64px;top:471px;width:6px;height:3px;background:#e0c48a"></div><div class="a" style="left:64px;top:473px;width:15px;height:10px;background:#f6dca0;border:1px solid #d8b470"></div>
<div class="t" style="left:85px;top:470px;font-size:12px;color:#111"><span style="letter-spacing:-0.8px">3</span> - 钻头/沉头孔钻 - [<span style="letter-spacing:-0.8px">WCS</span>: 俯视图] - [刀具面: 俯视图]</div>
<div class="a" style="left:83px;top:487px;width:16px;height:1px;background:#7a8aa8"></div><div class="a" style="left:83px;top:492px;width:16px;height:1px;background:#7a8aa8"></div><div class="a" style="left:83px;top:497px;width:16px;height:1px;background:#7a8aa8"></div><div class="a" style="left:86px;top:485px;width:4px;height:4px;border-radius:50%;border:1px solid #5a90c8;background:#dce8f4"></div><div class="a" style="left:92px;top:490px;width:4px;height:4px;border-radius:50%;border:1px solid #5a90c8;background:#dce8f4"></div><div class="a" style="left:88px;top:495px;width:4px;height:4px;border-radius:50%;border:1px solid #5a90c8;background:#dce8f4"></div>
<div class="t" style="left:104px;top:486px;font-size:12px;color:#111">参数 - 加工坐标系 <span style="letter-spacing:-0.8px">#0</span></div>
<div class="a" style="left:88px;top:500px;width:6px;height:3px;background:#9a9a9a"></div><div class="a" style="left:90px;top:503px;width:2px;height:12px;background:#d6a620"></div>
<div class="t" style="left:104px;top:502px;font-size:12px;color:#111"><span style="letter-spacing:-0.8px">#1</span> - <span style="letter-spacing:-0.8px">M9.00</span> 钻头/钻孔 - <span style="letter-spacing:-0.8px">SOLID</span> <span style="letter-spacing:-0.8px">CARBIDE</span> <span style="letter-spacing:-0.8px">DRILL</span> <span style="letter-spacing:-0.8px">5xDc</span> - <span style="letter-spacing:-0.8px">9</span></div>
<div class="t" style="left:84px;top:515px;font-size:11px;color:#3a9a6a;font-weight:bold">+</div><div class="a" style="left:87px;top:521px;width:11px;height:10px;border-right:2px solid #5aa880;border-bottom:2px solid #5aa880;border-radius:0 0 5px 0"></div>
<div class="t" style="left:104px;top:518px;font-size:12px;color:#111">图形: (<span style="letter-spacing:-0.8px">1</span>) 个图素</div>
<svg class="a" style="left:83px;top:532px" width="17" height="16"><path d="M1 4 Q4 1 8 4 T16 4 M1 8 Q4 5 8 8 T16 8 M1 12 Q4 9 8 12 T16 12" stroke="#8a96b0" stroke-width="1.2" fill="none"/></svg>
<div class="t" style="left:104px;top:534px;font-size:12px;color:#111">刀路 - <span style="letter-spacing:-0.8px">7.2K</span> - 脊柱骨钉<span style="letter-spacing:-0.8px">.NC</span> - 程序编号 <span style="letter-spacing:-0.8px">0</span></div>
<div class="a" style="left:51px;top:552px;width:9px;height:9px;border:1px solid #8a8a8a;background:linear-gradient(#fff,#e0e0e0)"></div><div class="a" style="left:53px;top:556px;width:5px;height:1px;background:#2a3a6a"></div>
<div class="a" style="left:65px;top:550px;width:14px;height:12px;border-radius:5px 3px 3px 3px;background:linear-gradient(135deg,#f4f4f4,#c8c8c8)"></div>
<div class="t" style="left:85px;top:550px;font-size:12px;color:#111"><span style="letter-spacing:-0.8px">4</span> - 毛坯模型 - [<span style="letter-spacing:-0.8px">WCS</span>: 俯视图] - [刀具面: 前视图] - <span style="letter-spacing:-0.8px">2</span></div>
<div class="a" style="left:83px;top:565px;width:16px;height:15px;background:#8a8a8a"></div><div class="a" style="left:84px;top:568px;width:14px;height:1px;background:#eee"></div><div class="a" style="left:84px;top:572px;width:14px;height:1px;background:#eee"></div><div class="a" style="left:84px;top:576px;width:14px;height:1px;background:#eee"></div>
<div class="t" style="left:104px;top:566px;font-size:12px;color:#111">参数 - 三角形 =  <span style="letter-spacing:-0.8px">384</span> - <span style="letter-spacing:-0.8px">9.4K</span></div>
<div class="a" style="left:51px;top:584px;width:9px;height:9px;border:1px solid #8a8a8a;background:linear-gradient(#fff,#e0e0e0)"></div><div class="a" style="left:53px;top:588px;width:5px;height:1px;background:#2a3a6a"></div>
<div class="a" style="left:64px;top:583px;width:6px;height:3px;background:#e0c48a"></div><div class="a" style="left:64px;top:585px;width:15px;height:10px;background:#f6dca0;border:1px solid #d8b470"></div><div class="t" style="left:70px;top:583px;font-size:12px;color:#2a6cc0;font-weight:bold">✓</div>
<div class="t" style="left:85px;top:582px;font-size:12px;color:#111"><span style="letter-spacing:-0.8px">5</span> - 螺纹铣削 - [<span style="letter-spacing:-0.8px">WCS</span>: 俯视图] - [刀具面: 俯视图]</div>
<div class="a" style="left:83px;top:599px;width:16px;height:1px;background:#7a8aa8"></div><div class="a" style="left:83px;top:604px;width:16px;height:1px;background:#7a8aa8"></div><div class="a" style="left:83px;top:609px;width:16px;height:1px;background:#7a8aa8"></div><div class="a" style="left:86px;top:597px;width:4px;height:4px;border-radius:50%;border:1px solid #5a90c8;background:#dce8f4"></div><div class="a" style="left:92px;top:602px;width:4px;height:4px;border-radius:50%;border:1px solid #5a90c8;background:#dce8f4"></div><div class="a" style="left:88px;top:607px;width:4px;height:4px;border-radius:50%;border:1px solid #5a90c8;background:#dce8f4"></div>
<div class="t" style="left:104px;top:598px;font-size:12px;color:#111">参数 - 加工坐标系 <span style="letter-spacing:-0.8px">#0</span></div>
<div class="a" style="left:88px;top:612px;width:6px;height:3px;background:#9a9a9a"></div><div class="a" style="left:90px;top:615px;width:2px;height:12px;background:#d6a620"></div>
<div class="t" style="left:104px;top:614px;font-size:12px;color:#111"><span style="letter-spacing:-0.8px">#3</span> - <span style="letter-spacing:-0.8px">M6.00</span> 螺纹铣削 - <span style="letter-spacing:-0.8px">THREAD</span> <span style="letter-spacing:-0.8px">MILL</span> - <span style="letter-spacing:-0.8px">2MM</span></div>
<div class="t" style="left:84px;top:627px;font-size:11px;color:#3a9a6a;font-weight:bold">+</div><div class="a" style="left:87px;top:633px;width:11px;height:10px;border-right:2px solid #5aa880;border-bottom:2px solid #5aa880;border-radius:0 0 5px 0"></div>
<div class="t" style="left:104px;top:630px;font-size:12px;color:#111">图形: (<span style="letter-spacing:-0.8px">1</span>) 个图素</div>
<svg class="a" style="left:83px;top:644px" width="17" height="16"><path d="M1 4 Q4 1 8 4 T16 4 M1 8 Q4 5 8 8 T16 8 M1 12 Q4 9 8 12 T16 12" stroke="#8a96b0" stroke-width="1.2" fill="none"/></svg>
<div class="t" style="left:104px;top:646px;font-size:12px;color:#111">刀路 - <span style="letter-spacing:-0.8px">9.1K</span> - 脊柱骨钉<span style="letter-spacing:-0.8px">.NC</span> - 程序编号 <span style="letter-spacing:-0.8px">0</span></div>
<svg class="a" style="left:66px;top:660px" width="14" height="16"><path d="M2 3 L12 8 L2 13 Z" fill="#e84828"/></svg>
</div><div class="a" id="vp" style="left:375px;top:190px;width:1545px;height:823px;overflow:hidden;background:linear-gradient(#98a0a9,#c9cdd3 50%,#f6f6f7)">
<svg width="1545" height="823" viewBox="375 190 1545 823" style="position:absolute;left:0;top:0">
<defs>
<linearGradient id="gGray" x1="375" x2="1048" y1="0" y2="0" gradientUnits="userSpaceOnUse">
<stop offset="0" stop-color="#7a7a7a"/><stop offset="0.18" stop-color="#7b7b7b"/><stop offset="0.42" stop-color="#8c8c8c"/><stop offset="0.57" stop-color="#aaaaaa"/><stop offset="0.68" stop-color="#8f8f8f"/><stop offset="0.83" stop-color="#757575"/><stop offset="1" stop-color="#6a6a6a"/>
</linearGradient>
<linearGradient id="gYel" x1="375" x2="1048" y1="0" y2="0" gradientUnits="userSpaceOnUse">
<stop offset="0" stop-color="#c9a006"/><stop offset="0.45" stop-color="#d2a808"/><stop offset="1" stop-color="#b8960e"/>
</linearGradient>
<linearGradient id="gOli" x1="375" x2="1048" y1="0" y2="0" gradientUnits="userSpaceOnUse"><stop offset="0" stop-color="#877108"/><stop offset="0.5" stop-color="#93790a"/><stop offset="1" stop-color="#9a7f08"/></linearGradient>
<linearGradient id="gLight" x1="0" x2="0" y1="190" y2="1012" gradientUnits="userSpaceOnUse">
<stop offset="0" stop-color="#eea73c"/><stop offset="1" stop-color="#f8b14b"/>
</linearGradient>
<linearGradient id="gDark" x1="1048" x2="1219" y1="0" y2="0" gradientUnits="userSpaceOnUse"><stop offset="0" stop-color="#e89e2c"/><stop offset="0.6" stop-color="#e49a2a"/><stop offset="1" stop-color="#dc962c"/></linearGradient>
<linearGradient id="gBrown" x1="1483" x2="1702" y1="0" y2="0" gradientUnits="userSpaceOnUse"><stop offset="0" stop-color="#a87126"/><stop offset="0.45" stop-color="#a36e24"/><stop offset="1" stop-color="#8e6228"/></linearGradient><linearGradient id="gBrownV" x1="0" x2="0" y1="190" y2="1013" gradientUnits="userSpaceOnUse"><stop offset="0" stop-color="#2a1500" stop-opacity="0.12"/><stop offset="0.5" stop-color="#2a1500" stop-opacity="0.05"/><stop offset="1" stop-color="#fff0d0" stop-opacity="0.04"/></linearGradient>
<linearGradient id="gInner" x1="0" x2="0" y1="280" y2="821" gradientUnits="userSpaceOnUse"><stop offset="0" stop-color="#855106"/><stop offset="0.55" stop-color="#a06610"/><stop offset="1" stop-color="#875307"/></linearGradient>
<linearGradient id="gDarkV" x1="0" x2="0" y1="190" y2="1013" gradientUnits="userSpaceOnUse"><stop offset="0" stop-color="#8a5000" stop-opacity="0.16"/><stop offset="0.6" stop-color="#8a5000" stop-opacity="0.03"/><stop offset="1" stop-color="#8a5000" stop-opacity="0"/></linearGradient>
<linearGradient id="gOliD" x1="375" y1="679" x2="700" y2="560" gradientUnits="userSpaceOnUse"><stop offset="0" stop-color="#4a3a00" stop-opacity="0.14"/><stop offset="1" stop-color="#4a3a00" stop-opacity="0"/></linearGradient>
</defs>
<rect x="375" y="190" width="673" height="378" fill="url(#gGray)"/>
<rect x="375" y="568" width="673" height="56" fill="url(#gYel)"/>
<rect x="375" y="624" width="673" height="55" fill="url(#gOli)"/><rect x="375" y="624" width="673" height="55" fill="url(#gOliD)"/>
<!-- orange body -->
<rect x="1205" y="190" width="278" height="823" fill="url(#gLight)"/>
<path d="M1048 190 H1219 V568 L1211 568 V1013 H1048 Z" fill="url(#gDark)"/><path d="M1048 190 H1219 V568 L1211 568 V1013 H1048 Z" fill="url(#gDarkV)"/>
<!-- teeth -->
<rect x="1175" y="190" width="44" height="378" fill="#e0a040" opacity="0.10"/>
<rect x="1175" y="568" width="36" height="445" fill="#e0a040" opacity="0.08"/>
<rect x="1211" y="190" width="8" height="378" fill="#c08838" opacity="0.25"/>
<!-- tooth 1 -->
<path d="M1048 190 H1205 L1210 198 L1301 257 Q1180 238 1048 232 Z" fill="#c2832a" opacity="0.35"/>
<path d="M1219 198.5 L1301 257 L1219 306 Z" fill="#dc962c"/>
<path d="M1219 198.5 L1301 257 Q1260 248 1219 246 Z" fill="#d08e2c"/>
<path d="M1219 262 Q1270 256 1301 257 L1219 280 Z" fill="#e89c2a" opacity="0.7"/>
<path d="M1048 276 Q1150 268 1219 266 V306 Q1150 300 1048 290 Z" fill="#e29a2e" opacity="0.35"/>
<path d="M1048 290 Q1150 298 1219 306 Q1190 312 1180 322 Q1120 322 1048 330 Z" fill="#c2832a" opacity="0.4"/>
<!-- tooth 2 -->
<path d="M1048 364.5 Q1150 368 1210 380 L1301 437 Q1180 420 1048 413 Z" fill="#c2832a" opacity="0.35"/>
<path d="M1219 380 L1301 437 L1219 487 Z" fill="#dc962c"/>
<path d="M1219 380 L1301 437 Q1260 428 1219 426 Z" fill="#d08e2c"/>
<path d="M1219 442 Q1270 436 1301 437 L1219 460 Z" fill="#e89c2a" opacity="0.7"/>
<path d="M1048 459 Q1150 470 1219 487 Q1160 500 1048 509 Z" fill="#c2832a" opacity="0.35"/>
<!-- tooth 3 -->
<path d="M1048 545 Q1150 548 1216 567 L1307 622 Q1180 602 1048 596 Z" fill="#c2832a" opacity="0.35"/>
<path d="M1211 563 L1307 622 L1211 677.5 Z" fill="#dc962c"/>
<path d="M1211 563 L1307 622 Q1260 612 1211 610 Z" fill="#cb8a26"/>
<path d="M1211 563 L1307 622 L1304 624 L1211 566 Z" fill="#e8a83a" opacity="0.6"/>
<path d="M1211 628 Q1270 622 1307 622 L1211 645 Z" fill="#e89c2a" opacity="0.7"/>
<path d="M1048 610 Q1150 605 1211 628 V677.5 H1048 Z" fill="#e49a28" opacity="0.35"/>
<path d="M1048 679 Q1150 679 1211 677.5 V690 Q1150 684 1048 692 Z" fill="#c2832a" opacity="0.35"/>
<!-- lower helix -->
<path d="M1048 726 H1095 Q1130 730 1160 755 L1198 778 L1048 780 Z" fill="#c2832a" opacity="0.35"/>
<path d="M1078 836.5 Q1140 825 1165 790 L1182 772 Q1195 800 1150 820 Q1110 838 1078 836.5 Z" fill="#eeaa48" opacity="0.45"/>
<path d="M1219 306 Q1180 318 1176 360 V900 Q1180 935 1211 950 V1013 H1176 Z" fill="#c8842a" opacity="0.10"/><path d="M1219 306 Q1180 318 1176 360 V900 Q1180 935 1211 950" stroke="#d89030" stroke-width="1.2" fill="none" opacity="0.5"/>
<!-- brown -->
<path d="M1483 190 H1702 V280 Q1668 550 1702 821 V1013 H1483 Z" fill="url(#gBrown)"/>
<path d="M1483 190 H1702 V280 Q1668 550 1702 821 V1013 H1483 Z" fill="url(#gBrownV)"/><path d="M1590 190 H1702 V280 Q1668 550 1702 821 V1013 H1590 Z" fill="#6a4010" opacity="0.08"/><path d="M1612 280 H1702 Q1668 550 1702 821 H1612 Z" fill="url(#gInner)"/><path d="M1702 280 Q1668 550 1702 821" stroke="#e09030" stroke-width="1.2" fill="none" opacity="0.6"/>
<!-- lines -->
<line x1="375" y1="780.5" x2="1048" y2="780.5" stroke="#ec7f98" stroke-width="1"/><line x1="1048" y1="780.5" x2="1211" y2="780.5" stroke="#f07848" stroke-width="1"/>
<line x1="375" y1="837.5" x2="1048" y2="837.5" stroke="#ec7f98" stroke-width="1"/>
<line x1="375" y1="1003.5" x2="1048" y2="1003.5" stroke="#ec7f98" stroke-width="1"/><line x1="1048" y1="1003.5" x2="1211" y2="1003.5" stroke="#f07848" stroke-width="1"/>
<line x1="397.5" y1="190" x2="397.5" y2="568" stroke="#a0a0a0" stroke-width="1" stroke-dasharray="8 3" opacity="0.35"/><line x1="397.5" y1="568" x2="397.5" y2="624" stroke="#e8cc40" stroke-width="1" opacity="0.35"/><line x1="397.5" y1="624" x2="397.5" y2="679" stroke="#3a4010" stroke-width="1" opacity="0.7"/><line x1="397.5" y1="679" x2="397.5" y2="905" stroke="#30c0c8" stroke-width="1.2" stroke-dasharray="7 3"/><line x1="397.5" y1="679" x2="397.5" y2="905" stroke="#40b040" stroke-width="1.2" stroke-dasharray="3 7" stroke-dashoffset="-7"/><line x1="397.5" y1="905" x2="397.5" y2="1013" stroke="#20a090" stroke-width="1.2"/>
<!-- toolpath -->
<path d="M370.0 726.0 L380.0 725.2 L390.0 724.4 L400.0 723.7 L410.0 722.9 L420.0 722.1 L430.0 721.3 L440.0 720.5 L450.0 719.7 L460.0 718.9 L470.0 718.1 L480.0 717.2 L490.0 716.4 L500.0 715.5 L510.0 714.6 L520.0 713.8 L530.0 712.9 L540.0 712.0 L550.0 711.0 L560.0 710.1 L570.0 709.1 L580.0 708.2 L590.0 707.2 L600.0 706.2 L610.0 705.1 L620.0 704.1 L630.0 703.0 L640.0 701.9 L650.0 700.8 L660.0 699.6 L670.0 698.4 L680.0 697.1 L690.0 695.8 L700.0 694.5 L702.0 694.2 L704.0 693.9 L706.0 693.6 L708.0 693.3 L710.0 693.0 L712.0 692.7 L714.0 692.4 L716.0 692.1 L718.0 691.8 L720.0 691.5 L722.0 691.2 L724.0 690.8 L726.0 690.5 L728.0 690.2 L730.0 689.8 L732.0 689.5 L734.0 689.1 L736.0 688.8 L738.0 688.4 L740.0 688.0 L742.0 687.6 L744.0 687.2 L746.0 686.8 L748.0 686.4 L750.0 685.9 L752.0 685.5 L754.0 685.0 L756.0 684.5 L758.0 683.9 L760.0 683.3 L762.0 682.7 L764.0 681.9 L765.0 681.5 L766.0 680.9 L766.8 681.0 L767.2 679.5 L767.0 678.5" stroke="#1f7fe8" stroke-width="4" fill="none" stroke-linejoin="round"/>
<path d="M370.0 812.6 L380.0 813.4 L390.0 814.2 L400.0 814.9 L410.0 815.7 L420.0 816.5 L430.0 817.3 L440.0 818.1 L450.0 818.9 L460.0 819.7 L470.0 820.5 L480.0 821.4 L490.0 822.2 L500.0 823.1 L510.0 824.0 L520.0 824.8 L530.0 825.7 L540.0 826.6 L550.0 827.6 L560.0 828.5 L570.0 829.5 L580.0 830.4 L590.0 831.4 L600.0 832.4 L610.0 833.5 L620.0 834.5 L630.0 835.6 L640.0 836.7 L650.0 837.8 L660.0 839.0 L670.0 840.2 L680.0 841.5 L690.0 842.8 L700.0 844.1 L702.0 844.4 L704.0 844.7 L706.0 845.0 L708.0 845.3 L710.0 845.6 L712.0 845.9 L714.0 846.2 L716.0 846.5 L718.0 846.8 L720.0 847.1 L722.0 847.4 L724.0 847.8 L726.0 848.1 L728.0 848.4 L730.0 848.8 L732.0 849.1 L734.0 849.5 L736.0 849.8 L738.0 850.2 L740.0 850.6 L742.0 851.0 L744.0 851.4 L746.0 851.8 L748.0 852.2 L750.0 852.7 L752.0 853.1 L754.0 853.6 L756.0 854.1 L758.0 854.7 L760.0 855.3 L762.0 855.9 L764.0 856.7 L765.0 857.1 L766.0 857.7 L766.8 857.6 L767.2 859.0 L767.0 860.0" stroke="#1f7fe8" stroke-width="4" fill="none" stroke-linejoin="round"/>
<path d="M767 858.6 C764.5 859.6 771.8 861.9 752 864.4 C732.2 866.9 688.5 870.3 648 873.7 C607.5 877.1 547.0 881.3 509 885 C471.0 888.7 437.8 893.3 420 895.7 C402.2 898.1 405.8 898.1 402 899.5 C398.2 900.9 397.8 903.2 397 904" stroke="#2a80e0" stroke-width="1.3" fill="none"/>
<!-- red arrow -->
<path d="M1328 632 L1502 535 L1502 574 L1683 577 L1682 699 L1498 696 L1498 735 Z" fill="#f2433a" opacity="0.96"/>
</svg>
<div class="t" style="left:1052px;top:412px;font-size:29px;color:#5a1d17">1.但是后面的螺纹</div>
<div class="t" style="left:1120px;top:450px;font-size:29px;color:#5a1d17">都对了</div>
</div>

<svg class="a" style="left:0px;top:200px;" width="330" height="55" viewBox="0 0 330 55"><path d="M5 8 L16 14 L5 20 Z" fill="#7ab8a0"/><path d="M14 13 L14 25 L17 22 L20 27 L22 26 L19 21 L23 21 Z" fill="#666"/><path d="M28 9 L36 17 M36 9 L28 17" stroke="#e8706a" stroke-width="1.8"/><path d="M37 14 L37 26 L40 23 L43 28 L45 27 L42 22 L46 22 Z" fill="#666"/><rect x="50" y="6" width="1" height="20" fill="#ddd"/><rect x="58" y="8" width="6" height="3" fill="#999"/><rect x="60" y="11" width="2" height="12" fill="#d6b040"/><path d="M65 14 L73 19 L65 24 Z" fill="#7ab8a0"/><rect x="80" y="8" width="6" height="3" fill="#999"/><rect x="82" y="11" width="2" height="12" fill="#d6b040"/><path d="M87 16 L94 23 M94 16 L87 23" stroke="#e8706a" stroke-width="1.6"/><rect x="103" y="8" width="6" height="3" fill="#999"/><rect x="105" y="11" width="2" height="6" fill="#d6b040"/><path d="M110 11 H118 M110 21 H118" stroke="#e8706a" stroke-width="1.5"/><rect x="113" y="15" width="6" height="3" fill="#999"/><rect x="115" y="18" width="2" height="6" fill="#d6b040"/><path d="M125 15 H130 L127.5 18 Z" fill="#aaa"/><rect x="137" y="6" width="1" height="20" fill="#ddd"/><rect x="145" y="8" width="15" height="15" fill="#8aa0b8"/><path d="M145 12 Q149 10 152 12 T160 12 M145 16 Q149 14 152 16 T160 16 M145 20 Q149 18 152 20 T160 20" stroke="#fff" stroke-width="1.2" fill="none"/><rect x="168" y="8" width="9" height="9" fill="#e0c89a"/><rect x="175" y="15" width="9" height="9" fill="#fff" stroke="#c8b080"/><path d="M177 19 L179 21 L182 17" stroke="#5aa880" fill="none"/><path d="M190 15 H195 L192.5 18 Z" fill="#aaa"/><rect x="201" y="8" width="15" height="15" fill="#8aa0b8"/><path d="M201 12 Q205 10 208 12 T216 12 M201 16 Q205 14 208 16 T216 16" stroke="#fff" stroke-width="1.2" fill="none"/><circle cx="213" cy="20" r="4" fill="#e8b870"/><text x="224" y="21" font-size="13" fill="#9ab4d0" font-family="Liberation Sans">G1</text><rect x="246" y="8" width="6" height="3" fill="#999"/><rect x="248" y="11" width="2" height="12" fill="#d6b040"/><path d="M251 19 H259" stroke="#e8706a" stroke-width="1.6"/><path d="M257 16 L261 19 L257 22 Z" fill="#e8706a"/><rect x="268" y="6" width="1" height="20" fill="#ddd"/><path d="M278 24 L289 11" stroke="#e8806a" stroke-width="3"/><circle cx="279" cy="11" r="3" fill="#e8c050"/><rect x="298" y="6" width="1" height="20" fill="#ddd"/><circle cx="313" cy="16" r="7.5" fill="#8ab0d8" stroke="#5a8ac0"/><text x="309.5" y="20.5" font-size="11" fill="#fff" font-weight="bold" font-family="Liberation Sans">?</text><rect x="8" y="38" width="11" height="9" fill="#e0c89a"/><path d="M10 38 V35 Q13.5 30 17 35 V38" stroke="#c8b080" stroke-width="1.5" fill="none"/><path d="M27 36 Q31 33 35 36 T43 36 M27 40 Q31 37 35 40 T43 40 M27 44 Q31 41 35 44 T43 44" stroke="#8aa0b8" stroke-width="1.2" fill="none"/><path d="M52 48 V37 Q52 32 57 32 Q62 32 62 37 V48 L59 46 L57 48 L55 46 Z" fill="#c0c0c0"/><rect x="72" y="30" width="1" height="20" fill="#ddd"/><path d="M81 36 H93 L87 43 Z" fill="#e8806a"/><path d="M103 43 H115 L109 36 Z" fill="#e8806a"/><path d="M125 35 H134 M125 35 V44 H136" stroke="#e8806a" stroke-width="1.8" fill="none"/><path d="M135 41 L139 44 L135 47 Z" fill="#e8806a"/><path d="M147 39 H160 L153.5 32 Z M147 42 H160 L153.5 49 Z" fill="#e8806a"/><rect x="146" y="40" width="15" height="1.5" fill="#fff"/><rect x="168" y="30" width="1" height="20" fill="#ddd"/><rect x="173" y="31" width="19" height="18" fill="#c4d4ea"/><path d="M174 37 Q179 33 184 37 M174 41 Q179 37 184 41" stroke="#6a80a0" stroke-width="1" fill="none"/><path d="M184 37 L184 47 L186.5 44.5 L188.5 48 L190 47 L188 43.5 L191 43.5 Z" fill="#445"/><circle cx="203" cy="38" r="6" fill="none" stroke="#bbb"/><rect x="203" y="40" width="9" height="8" fill="none" stroke="#e8806a"/><rect x="217.5" y="30.5" width="32" height="19" fill="#fff" stroke="#ddd"/><rect x="221" y="33" width="14" height="13" fill="none" stroke="#8aa0b8"/><circle cx="231" cy="39.5" r="2.5" fill="#e8b870"/><path d="M224 36 H226 M224 40 H226 M224 43 H226" stroke="#e8806a"/><path d="M242 38 H247 L244.5 41 Z" fill="#aaa"/><rect x="255" y="30" width="1" height="20" fill="#ddd"/><rect x="262" y="32" width="13" height="3" fill="#8aa0b8"/><rect x="266" y="35" width="4" height="6" fill="#bbb"/><rect x="262" y="43" width="13" height="5" fill="#8aa0b8"/><rect x="273" y="38" width="2" height="10" fill="#d6b040"/><circle cx="289" cy="38" r="5.5" fill="#fff" stroke="#555"/><path d="M289 32.5 A5.5 5.5 0 0 1 294.5 38 H289 Z M289 38 V43.5 A5.5 5.5 0 0 1 283.5 38 Z" fill="#444"/><path d="M292 48 L300 36" stroke="#e0b040" stroke-width="2.2"/></svg>
<div class="a" style="left:375px;top:166px;width:1545px;height:1px;background:linear-gradient(90deg,#5a5a5a 0px,#6a6a6a 300px,#8a8a8a 385px,#6a6a6a 500px,#555 673px,#b08040 673px,#b8884a 1108px,#8a6428 1108px,#7a5a30 1327px,#8a9098 1327px)"></div>
<div class="a" style="left:375px;top:167px;width:1545px;height:23px;background:#efefef"></div>
<svg class="a" style="left:375px;top:166px;" width="1545" height="24" viewBox="0 0 1545 24"><rect x="3.5" y="2.5" width="19" height="20" fill="#e8e8e8" stroke="#c8c8c8"/><rect x="24.5" y="2.5" width="19" height="20" fill="#e8e8e8" stroke="#c8c8c8"/><rect x="45.5" y="2.5" width="19" height="20" fill="#e8e8e8" stroke="#c8c8c8"/><rect x="66.5" y="2.5" width="19" height="20" fill="#e8e8e8" stroke="#c8c8c8"/><rect x="87.5" y="2.5" width="19" height="20" fill="#e8e8e8" stroke="#c8c8c8"/><rect x="108.5" y="2.5" width="19" height="20" fill="#e8e8e8" stroke="#c8c8c8"/><path d="M8 6 L18 12.5 L8 19 Z" fill="#2e66b8"/><rect x="27" y="6" width="13" height="13" fill="#2e66b8"/><rect x="48" y="6" width="2" height="13" fill="#2e66b8"/><path d="M58 6 L51 12.5 L58 19 Z M64 6 L57 12.5 L64 19 Z" fill="#2e66b8"/><path d="M76 6 L69 12.5 L76 19 Z M83 6 L76 12.5 L83 19 Z" fill="#2e66b8"/><path d="M91 6 L98 12.5 L91 19 Z M98 6 L105 12.5 L98 19 Z" fill="#2e66b8"/><path d="M111 6 L118 12.5 L111 19 Z M117 6 L124 12.5 L117 19 Z" fill="#2e66b8"/><rect x="124" y="6" width="2" height="13" fill="#2e66b8"/><rect x="145.5" y="2.5" width="19" height="20" fill="#d8e8f8" stroke="#2e66b8"/><path d="M149 18 L158 8" stroke="#2e66b8" stroke-width="1.3"/><circle cx="158" cy="8" r="2.2" fill="#e02020"/><rect x="166.5" y="2.5" width="19" height="20" fill="#e8e8e8" stroke="#c8c8c8"/><path d="M169 17 L178 9 Q182 6 183 10 L175 18" stroke="#2e66b8" stroke-width="1.3" fill="none"/><circle cx="174" cy="10" r="2.2" fill="#e02020"/><path d="M207 9 V12 M243 9 V12" stroke="#bbb"/><path d="M210 23.5 H235" stroke="#ccc"/><path d="M237 18 L243 12 L249 18 V24 H237 Z" fill="#0a6ed8"/><path d="M268 5 V10" stroke="#111" stroke-width="1.5"/><rect x="267" y="15" width="1225" height="6" fill="#8a3ab0"/><rect x="519" y="12" width="8" height="12" fill="#e8e4d8" stroke="#8a8478"/><rect x="521" y="13" width="4" height="11" fill="#9a9488"/><path d="M1491 5 V10" stroke="#111" stroke-width="1.5"/><rect x="1504.5" y="1.5" width="18" height="21" fill="#e8e8e8" stroke="#c8c8c8"/><path d="M1510.5 4 H1516.5 L1521 8.5 V14.5 L1516.5 19 H1510.5 L1506 14.5 V8.5 Z" fill="#f04a10" stroke="#a02000" stroke-width="0.7"/><rect x="1512.3" y="5" width="2.4" height="13" fill="#111"/><rect x="1525.5" y="1.5" width="18" height="21" fill="#e8e8e8" stroke="#c8c8c8"/><path d="M1530 8 Q1530 3 1535 3 Q1540 3 1540 8 Q1540 11 1535 12 V15" stroke="#555" stroke-width="1.8" fill="none"/><ellipse cx="1535" cy="19" rx="2" ry="1.3" fill="none" stroke="#555"/></svg>
<svg class="a" style="left:375px;top:885px;" width="140" height="100" viewBox="0 0 140 100"><rect x="49" y="30" width="51" height="51" fill="#d8d8d8"/><rect x="49" y="30" width="10" height="10" fill="#9c9c9c"/><rect x="90" y="30" width="10" height="10" fill="#9c9c9c"/><rect x="49" y="71" width="10" height="10" fill="#9c9c9c"/><rect x="90" y="71" width="10" height="10" fill="#9c9c9c"/><rect x="61" y="31" width="27" height="8" fill="#a8a8a8"/><rect x="61" y="72" width="27" height="8" fill="#a8a8a8"/><rect x="50" y="42" width="8" height="27" fill="#a8a8a8"/><rect x="91" y="42" width="8" height="27" fill="#a8a8a8"/><rect x="57" y="38" width="35" height="35" rx="5" fill="#c6c6c6"/><path d="M46 83 V24" stroke="#1818c8" stroke-width="2.4"/><path d="M42.5 27 L46 19 L49.5 27 Z" fill="#1818c8"/><path d="M45 83 H104" stroke="#d01010" stroke-width="2.4"/><path d="M101 79.5 L109 83 L101 86.5 Z" fill="#d01010"/><text x="42" y="18.5" font-size="11" font-weight="bold" fill="#2020c0" font-family="Liberation Sans">Z</text><text x="111" y="89" font-size="11" font-weight="bold" fill="#d01010" font-family="Liberation Sans">X</text></svg>
<div class="t" style="left:300px;width:300px;text-align:center;top:936px;font-size:11px;color:#111;">前视图</div>
<svg class="a" style="left:375px;top:885px;" width="80" height="130" viewBox="0 0 80 130"><rect x="6.5" y="51.5" width="17" height="47" rx="8.5" fill="#eef0f2" stroke="#b8bcc4"/><path d="M15 57 V68 M15 79 V92" stroke="#4a80c0" stroke-width="2"/><path d="M11 61 L15 55 L19 61 Z M11 88 L15 94 L19 88 Z" fill="#4a80c0"/><circle cx="14.5" cy="114" r="8" fill="#eef0f2" stroke="#b8bcc4"/><path d="M10 112 Q12 108 16 109 M19 116 Q17 120 13 119" stroke="#4a80c0" stroke-width="1.6" fill="none"/><rect x="31" y="105.5" width="46" height="17" rx="8.5" fill="#eef0f2" stroke="#b8bcc4"/><path d="M37 114 H50 M56 114 H70" stroke="#4a80c0" stroke-width="2"/><path d="M40 110 L35 114 L40 118 Z M67 110 L72 114 L67 118 Z" fill="#4a80c0"/></svg>
<div class="t" style="left:463px;top:992px;font-size:12px;color:#000;font-weight:bold">前视图</div>
<svg class="a" style="left:1780px;top:930px;" width="140" height="80" viewBox="0 0 140 80"><path d="M20.5 49 V73 M116.5 49 V73 M20 61.5 H117" stroke="#111" stroke-width="1.3"/><rect x="130" y="10" width="7" height="58" rx="3.5" fill="#a8a8a8"/><rect x="130" y="51" width="7" height="17" rx="3" fill="#3ad060"/></svg>
<div class="t" style="left:1816px;top:978px;font-size:13px;color:#000;font-weight:bold;font-family:'Liberation Serif',serif">0.531 毫米</div>
<div class="a" style="left:415px;top:221px;width:242px;height:156px;background:rgba(0,0,0,0.06);filter:blur(2px)"></div>
<div class="a" style="left:418px;top:223px;width:236px;height:151px;background:#efefef;border:1px solid #a8a8a8"></div>
<div class="a" style="left:419px;top:224px;width:234px;height:29px;background:#fff"></div>
<svg class="a" style="left:425px;top:229px;" width="20" height="18" viewBox="0 0 20 18"><path d="M2 6 H8 L6 10 H1 Z M4 11 H7 L6 14 H3 Z" fill="#d01830"/><path d="M9 2 H17 L13 12 H8 Z" fill="#d01830"/><text x="7" y="17.5" font-size="8" font-weight="bold" font-style="italic" fill="#111" font-family="Liberation Sans">25</text></svg>
<div class="t" style="left:447px;top:230px;font-size:13px;color:#8a8a8a;">刀路模拟</div>
<svg class="a" style="left:631px;top:230px;" width="14" height="14" viewBox="0 0 14 14"><path d="M1.5 1.5 L12.5 12.5 M12.5 1.5 L1.5 12.5" stroke="#555" stroke-width="1"/></svg>
<svg class="a" style="left:418px;top:223px;" width="236" height="151" viewBox="0 0 236 151"><rect x="1.5" y="31.5" width="18" height="17" fill="#e6e6e6" stroke="#c4c4c4" stroke-width="1"/><path d="M6 36 H18 L12 42 Z M6 42 H18 L12 48 Z" fill="#0a14d8"/><path d="M6 36 H18 M6 42 H18" stroke="#0a14d8"/><rect x="6.5" y="54.5" width="21" height="20" fill="#cde0f5" stroke="#2a5aa8" stroke-width="1.5"/><rect x="30.5" y="54.5" width="21" height="20" fill="#cde0f5" stroke="#2a5aa8" stroke-width="1.5"/><rect x="54.5" y="54.5" width="21" height="20" fill="#e6e6e6" stroke="#c4c4c4" stroke-width="1"/><rect x="78.5" y="54.5" width="21" height="20" fill="#cde0f5" stroke="#2a5aa8" stroke-width="1.5"/><rect x="103.5" y="54.5" width="21" height="20" fill="#e6e6e6" stroke="#c4c4c4" stroke-width="1"/><rect x="127.5" y="54.5" width="21" height="20" fill="#e6e6e6" stroke="#c4c4c4" stroke-width="1"/><rect x="151.5" y="54.5" width="21" height="20" fill="#e6e6e6" stroke="#c4c4c4" stroke-width="1"/><rect x="127.5" y="80.5" width="21" height="20" fill="#e6e6e6" stroke="#c4c4c4" stroke-width="1"/><rect x="151.5" y="80.5" width="21" height="20" fill="#e6e6e6" stroke="#c4c4c4" stroke-width="1"/><rect x="178.5" y="80.5" width="21" height="20" fill="#e6e6e6" stroke="#c4c4c4" stroke-width="1"/><rect x="202.5" y="80.5" width="21" height="20" fill="#e6e6e6" stroke="#c4c4c4" stroke-width="1"/><rect x="127.5" y="118.5" width="51" height="26" fill="#e6e6e6" stroke="#c4c4c4" stroke-width="1"/><rect x="181.5" y="118.5" width="51" height="26" fill="#e6e6e6" stroke="#c4c4c4" stroke-width="1"/><path d="M11 64 Q18 56 26 62 M11 69 Q18 77 26 71" stroke="#3aa860" stroke-width="1" fill="none"/><path d="M11 69 Q18 77 26 71" stroke="#e04040" fill="none"/><path d="M10 66.5 H27" stroke="#2a8ad8" stroke-width="2"/><rect x="38" y="59" width="4" height="15" fill="#d8b020" stroke="#806010" stroke-width="0.5"/><rect x="61" y="58" width="11" height="4" fill="#5a5a7a"/><rect x="64" y="62" width="4" height="12" fill="#d8b020" stroke="#806010" stroke-width="0.5"/><path d="M83 72 V65 H93 V72 M86 65 V72" stroke="#c8a010" stroke-width="3" fill="none"/><rect x="93" y="58" width="4" height="9" fill="#7a7a9a"/><path d="M107 71 Q112 70 114 66 Q118 62 121 57" stroke="#2a8ad8" stroke-width="1.2" fill="none"/><circle cx="115" cy="66" r="3.2" fill="#e02020"/><rect x="138" y="58" width="7" height="12" rx="2" fill="#e0c020" stroke="#a08010" stroke-width="0.5"/><path d="M133 74 L138 69 H145 L139 74 Z" fill="#6a5aa8"/><path d="M162 58 Q159 58 160 63 L161 67 H163 L164 63 Q165 58 162 58 Z" fill="#888" stroke="#444" stroke-width="0.6"/><circle cx="162" cy="71" r="1.6" fill="none" stroke="#222"/><path d="M137 95 L144 87 M140 96 L148 88" stroke="#2a8ad8" stroke-width="1.6"/><path d="M135 96 L137 94" stroke="#2a8ad8" stroke-width="1.6"/><path d="M158 95 L167 86 M161 96 L170 87 M164 97 L172 89" stroke="#2a8ad8" stroke-width="1.5"/><rect x="182" y="88" width="14" height="9" rx="1" fill="#666"/><rect x="186" y="86" width="6" height="3" fill="#666"/><circle cx="189" cy="92.5" r="3" fill="#ccc" stroke="#333"/><rect x="206" y="85" width="14" height="14" fill="#3a76c0"/><rect x="209" y="85" width="8" height="5" fill="#fff"/><rect x="209" y="93" width="8" height="6" fill="#fff"/><rect x="211" y="94" width="2" height="3" fill="#3a76c0"/><path d="M206 85 H220" stroke="#e04040"/><circle cx="152" cy="131" r="10" fill="#5aa888"/><path d="M147 131 L151 135 L158 127" stroke="#fff" stroke-width="3" fill="none"/><circle cx="206" cy="131" r="10" fill="#3a78c0"/><text x="201.5" y="136" font-size="14" font-weight="bold" fill="#fff" font-family="Liberation Sans">?</text></svg>
<div class="a" style="left:0px;top:1013px;width:1920px;height:27px;background:#2b579a"></div>
<div class="t" style="left:2px;top:1020px;font-size:12px;color:#fff;">X:2.0412</div>
<div class="t" style="left:63px;top:1020px;font-size:12px;color:#fff;">Y:-0.0000</div>
<div class="t" style="left:128px;top:1020px;font-size:12px;color:#fff;">Z:39.0618</div>
<div class="t" style="left:857px;top:1020px;font-size:12px;color:#fff;">截面视图: 关闭</div>
<div class="t" style="left:954px;top:1020px;font-size:12px;color:#fff;">选择的图素: 0</div>
<div class="t" style="left:1102px;top:1020px;font-size:12px;color:#fff;">X:</div>
<div class="t" style="left:1125px;top:1020px;font-size:12px;color:#fff;">2.47375</div>
<div class="t" style="left:1209px;top:1020px;font-size:12px;color:#fff;">Y:</div>
<div class="t" style="left:1231px;top:1020px;font-size:12px;color:#fff;">41.76470</div>
<div class="t" style="left:1309px;top:1020px;font-size:12px;color:#fff;">Z:</div>
<div class="t" style="left:1331px;top:1020px;font-size:12px;color:#fff;">0.00000</div>
<div class="t" style="left:1401px;top:1020px;font-size:12px;color:#fff;">3D</div>
<div class="t" style="left:1431px;top:1020px;font-size:12px;color:#fff;">绘图平面: 前视图</div>
<div class="t" style="left:1545px;top:1020px;font-size:12px;color:#fff;">刀具平面: 前视图</div>
<div class="t" style="left:1659px;top:1020px;font-size:12px;color:#fff;">WCS: 俯视图</div>
<svg class="a" style="left:1380px;top:1024px;" width="370" height="8" viewBox="0 0 370 8"><path d="M2 1.5 L5 4.5 L8 1.5" stroke="#8aa8d8" fill="none"/><path d="M151 1.5 L154 4.5 L157 1.5" stroke="#8aa8d8" fill="none"/><path d="M265 1.5 L268 4.5 L271 1.5" stroke="#8aa8d8" fill="none"/><path d="M358 1.5 L361 4.5 L364 1.5" stroke="#8aa8d8" fill="none"/></svg>
<div class="a" style="left:1865px;top:1014px;width:55px;height:26px;background:#1f63c6"></div>
<svg class="a" style="left:1750px;top:1013px;" width="170" height="27" viewBox="0 0 170 27"><defs><radialGradient id="sph" cx="0.4" cy="0.35" r="0.7"><stop offset="0" stop-color="#fff"/><stop offset="0.6" stop-color="#c8c8c8"/><stop offset="1" stop-color="#888"/></radialGradient></defs><circle cx="16" cy="13.5" r="7" fill="none" stroke="#fff" stroke-width="1.3"/><ellipse cx="16" cy="13.5" rx="3" ry="7" fill="none" stroke="#fff" stroke-width="1"/><path d="M9 13.5 H23" stroke="#fff"/><circle cx="43" cy="13.5" r="7" fill="none" stroke="#fff" stroke-width="1.3"/><ellipse cx="43" cy="13.5" rx="3" ry="7" fill="none" stroke="#fff" stroke-width="1"/><path d="M36 13.5 H50" stroke="#fff"/><circle cx="71" cy="13.5" r="7" fill="none" stroke="#fff" stroke-width="1.3"/><ellipse cx="71" cy="13.5" rx="3" ry="7" fill="none" stroke="#fff" stroke-width="1"/><path d="M64 13.5 H78" stroke="#fff"/><circle cx="99" cy="13.5" r="7.5" fill="url(#sph)"/><circle cx="127" cy="13.5" r="7.5" fill="url(#sph)"/><circle cx="155" cy="13.5" r="7.5" fill="url(#sph)"/><path d="M150 19 L160 8" stroke="#2b579a" stroke-width="2"/></svg>
<div class="a" style="left:0px;top:1040px;width:1920px;height:40px;background:#1c1c1c"></div>
<div class="a" style="left:246px;top:1040px;width:48px;height:40px;background:#3a3a3a"></div>
<div class="a" style="left:103px;top:1078px;width:40px;height:2px;background:#76b9ed"></div>
<div class="a" style="left:152px;top:1078px;width:40px;height:2px;background:#76b9ed"></div>
<div class="a" style="left:201px;top:1078px;width:40px;height:2px;background:#76b9ed"></div>
<div class="a" style="left:246px;top:1078px;width:48px;height:2px;background:#76b9ed"></div>
<div class="a" style="left:299px;top:1078px;width:40px;height:2px;background:#76b9ed"></div>
<div class="a" style="left:348px;top:1078px;width:40px;height:2px;background:#76b9ed"></div>
<svg class="a" style="left:0px;top:1040px;" width="1920" height="40" viewBox="0 0 1920 40"><path d="M16 10 L24 9 V19 H16 Z M25.5 8.8 L33 7.8 V19 H25.5 Z M16 20.5 H24 V30 L16 29 Z M25.5 20.5 H33 V31.2 L25.5 30.2 Z" fill="#fff"/><circle cx="74" cy="17" r="6" fill="none" stroke="#fff" stroke-width="1.5"/><path d="M70 21.5 L64 28" stroke="#fff" stroke-width="1.8"/><circle cx="122" cy="20" r="11" fill="#4ab838"/><circle cx="122" cy="20" r="8" fill="#fff"/><text x="116" y="26" font-size="16" font-weight="bold" fill="#3aa030" font-family="Liberation Sans">e</text><path d="M161 10 H170 L172 12 H182 V30 H161 Z" fill="#e8b030"/><path d="M161 15 H182 V30 H161 Z" fill="#f8d060"/><rect x="167" y="22" width="10" height="8" fill="#3a8ad8"/><path d="M212 28 L222 10 L232 13 L226 31 Z" fill="#a8d8f0" stroke="#6a9ab8"/><path d="M212 28 L226 31 L228 28 Z" fill="#ddd"/><path d="M258 12 H266 L262 22 H254 Z M268 12 H283 L276 28 H268 L272 19 L266 28 H262 Z" fill="#e0203a"/><text x="257" y="33" font-size="8" font-weight="bold" font-style="italic" fill="#fff" font-family="Liberation Sans">2025</text><rect x="307" y="8" width="24" height="24" rx="3" fill="url(#rb)"/><rect x="311" y="12" width="16" height="16" fill="#fff"/><text x="312" y="26" font-size="13" fill="#2a6ac0" font-family="Liberation Sans">图</text><defs><linearGradient id="rb" x1="0" x2="1"><stop offset="0" stop-color="#f8c020"/><stop offset="0.5" stop-color="#f03a80"/><stop offset="1" stop-color="#30c0e0"/></linearGradient></defs><rect x="359" y="7" width="17" height="26" fill="#fff"/><rect x="361" y="9" width="13" height="5" fill="#1c1c1c"/><rect x="361.0" y="16" width="3" height="2.5" fill="#1c1c1c"/><rect x="365.5" y="16" width="3" height="2.5" fill="#1c1c1c"/><rect x="370.0" y="16" width="3" height="2.5" fill="#1c1c1c"/><rect x="361.0" y="20" width="3" height="2.5" fill="#1c1c1c"/><rect x="365.5" y="20" width="3" height="2.5" fill="#1c1c1c"/><rect x="370.0" y="20" width="3" height="2.5" fill="#1c1c1c"/><rect x="361.0" y="24" width="3" height="2.5" fill="#1c1c1c"/><rect x="365.5" y="24" width="3" height="2.5" fill="#1c1c1c"/><rect x="370.0" y="24" width="3" height="2.5" fill="#1c1c1c"/><rect x="361.0" y="28" width="3" height="2.5" fill="#1c1c1c"/><rect x="365.5" y="28" width="3" height="2.5" fill="#1c1c1c"/><rect x="370.0" y="28" width="3" height="2.5" fill="#1c1c1c"/><path d="M1654 63 L1660 57 L1666 63" stroke="#fff" stroke-width="1.3" fill="none" transform="translate(0,-40)"/><circle cx="1692" cy="20" r="7.5" fill="#e8d020"/><path d="M1688 20 H1696 M1692 16 V24" stroke="#2a8a3a" stroke-width="2"/><rect x="1716" y="14" width="16" height="11" fill="none" stroke="#fff"/><path d="M1720 25 V30 H1728" stroke="#fff" fill="none"/><path d="M1746 16 H1750 L1755 12 V28 L1750 24 H1746 Z" fill="none" stroke="#fff"/><path d="M1758 15 Q1761 20 1758 25 M1761 13 Q1765 20 1761 27" stroke="#fff" fill="none"/><rect x="1879" y="12" width="16" height="12" fill="none" stroke="#fff" stroke-width="1.2"/></svg>
<div class="t" style="left:1775px;top:1052px;font-size:14px;color:#fff;">英</div>
<div class="t" style="left:1679px;width:300px;text-align:center;top:1045px;font-size:12px;color:#fff;">0:45</div>
<div class="t" style="left:1680px;width:300px;text-align:center;top:1063px;font-size:12px;color:#fff;">2025/9/21</div>
<div class="t" style="left:1706px;top:1059px;font-size:15px;color:rgba(220,220,220,0.85);font-family:'Liberation Serif',serif;letter-spacing:-1px">UG爱好者论坛 WWW.UGSNX.COM</div>
</body></html>
